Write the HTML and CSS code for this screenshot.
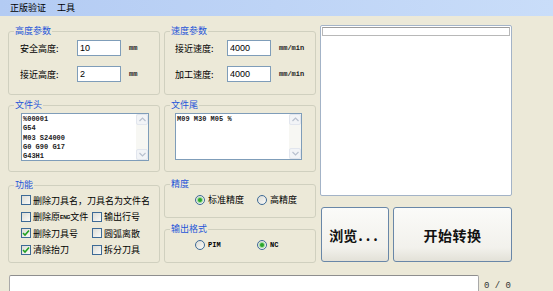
FILE: index.html
```html
<!DOCTYPE html>
<html lang="zh-CN">
<head>
  <meta charset="UTF-8" />
  <title>NC 转换</title>
  <link rel="stylesheet" href="styles.css">
</head>
<body>

  <!-- Menu -->
  <div class="menubar">
    <span>正版验证</span>
    <span>工具</span>
  </div>

  <div class="main">
    <!-- Left column -->
    <div class="col">
      <div class="group g-params">
        <span class="group-title">高度参数</span>
        <div class="param-row"><label>安全高度:</label><input class="edit" type="text" value="10"><span class="unit">mm</span></div>
        <div class="param-row"><label>接近高度:</label><input class="edit" type="text" value="2"><span class="unit">mm</span></div>
      </div>

      <div class="group g-memo">
        <span class="group-title">文件头</span>
        <div class="memo">
          <div class="memo-text">%00001<br>G54<br>M03 S24000<br>G0 G90 G17<br>G43H1</div>
          <div class="vscroll">
            <span class="sb-btn"><svg width="7" height="5" viewBox="0 0 7 5"><path d="M0.5 4 L3.5 1 L6.5 4" fill="none" stroke="#b9c1cf" stroke-width="1.2"/></svg></span>
            <span class="sb-track"></span>
            <span class="sb-btn"><svg width="7" height="5" viewBox="0 0 7 5"><path d="M0.5 1 L3.5 4 L6.5 1" fill="none" stroke="#b9c1cf" stroke-width="1.2"/></svg></span>
          </div>
        </div>
      </div>

      <div class="group g-func">
        <span class="group-title">功能</span>
        <div class="check-grid">
          <div class="check wide"><span class="chk"></span>删除刀具名，刀具名为文件名</div>
          <div class="check"><span class="chk"></span>删除原<small>ENG</small>文件</div>
          <div class="check"><span class="chk"></span>输出行号</div>
          <div class="check"><span class="chk on"><svg width="8" height="8" viewBox="0 0 8 8"><path d="M1 4 L3 6 L7 1.5" fill="none" stroke="#21a121" stroke-width="1.6"/></svg></span>删除刀具号</div>
          <div class="check"><span class="chk"></span>圆弧离散</div>
          <div class="check"><span class="chk on"><svg width="8" height="8" viewBox="0 0 8 8"><path d="M1 4 L3 6 L7 1.5" fill="none" stroke="#21a121" stroke-width="1.6"/></svg></span>清除抬刀</div>
          <div class="check"><span class="chk"></span>拆分刀具</div>
        </div>
      </div>
    </div>

    <!-- Right column -->
    <div class="col">
      <div class="group g-params right">
        <span class="group-title">速度参数</span>
        <div class="param-row"><label>接近速度:</label><input class="edit" type="text" value="4000"><span class="unit">mm/min</span></div>
        <div class="param-row"><label>加工速度:</label><input class="edit" type="text" value="4000"><span class="unit">mm/min</span></div>
      </div>

      <div class="group g-memo right">
        <span class="group-title">文件尾</span>
        <div class="memo">
          <div class="memo-text">M09 M30 M05 %</div>
          <div class="vscroll">
            <span class="sb-btn"><svg width="7" height="5" viewBox="0 0 7 5"><path d="M0.5 4 L3.5 1 L6.5 4" fill="none" stroke="#b9c1cf" stroke-width="1.2"/></svg></span>
            <span class="sb-track"></span>
            <span class="sb-btn"><svg width="7" height="5" viewBox="0 0 7 5"><path d="M0.5 1 L3.5 4 L6.5 1" fill="none" stroke="#b9c1cf" stroke-width="1.2"/></svg></span>
          </div>
        </div>
      </div>

      <div class="group g-radio g-precision">
        <span class="group-title">精度</span>
        <div class="radio-row">
          <div class="radio"><span class="rad on"></span>标准精度</div>
          <div class="radio"><span class="rad"></span>高精度</div>
        </div>
      </div>

      <div class="group g-radio g-format">
        <span class="group-title">输出格式</span>
        <div class="radio-row">
          <div class="radio"><span class="rad"></span><span class="mono">PIM</span></div>
          <div class="radio"><span class="rad on"></span><span class="mono">NC</span></div>
        </div>
      </div>
    </div>

    <!-- Files list + actions -->
    <div class="side">
      <div class="listbox">
        <div class="list-header"></div>
      </div>
      <div class="actions">
        <button class="btn btn-browse">浏览<span class="dots">...</span></button>
        <button class="btn btn-start">开始转换</button>
      </div>
    </div>
  </div>

  <div class="footer">
    <div class="progress"></div>
    <span class="count">0 / 0</span>
  </div>

</body>
</html>
```

FILE: styles.css
```css
body {
  margin: 0;
  background: #ece9d8;
  font-family: "Noto Sans CJK SC", "Liberation Sans", sans-serif;
  font-size: 9px;
  color: #000;
  width: 553px;
  height: 291px;
  overflow: hidden;
}
.menubar {
  height: 16px;
  display: flex;
  align-items: center;
  gap: 11px;
  padding-left: 10px;
  background: linear-gradient(to right, #b3cbf3, #c9ddf9);
  line-height: 12px;
}
.main {
  display: flex;
  padding: 9px 0 0 8px;
}
.col {
  width: 152px;
  padding-top: 6px;
  margin-right: 4px;
  display: flex;
  flex-direction: column;
}
.group {
  position: relative;
  box-sizing: border-box;
  border: 1px solid #d0d0bf;
  border-radius: 3px;
}
.group-title {
  position: absolute;
  top: -7px;
  left: 5px;
  padding: 0 1px;
  line-height: 12px;
  background: #ece9d8;
  color: #1f55d8;
}

/* parameter rows */
.g-params {
  height: 64px;
  padding: 8px 0 0 11px;
  display: flex;
  flex-direction: column;
  gap: 10px;
}
.g-params.right {
  padding-left: 10px;
}
.param-row {
  display: flex;
  align-items: center;
  height: 16px;
}
.param-row label {
  width: 57px;
}
.g-params.right .param-row label {
  width: 52px;
}
.edit {
  box-sizing: border-box;
  width: 44px;
  height: 16px;
  margin: 0;
  padding: 0 2px;
  border: 1px solid #7f9db9;
  background: #fff;
  font-family: "Liberation Sans", sans-serif;
  font-size: 9px;
  color: #000;
  outline: none;
}
.unit {
  margin-left: 8px;
  font-family: "Liberation Mono", monospace;
  font-size: 7px;
  font-weight: bold;
  color: #222;
}

/* memo boxes */
.g-memo {
  height: 67px;
  margin-top: 10px;
  padding: 7px 0 0 12px;
}
.g-memo.right {
  padding-left: 10px;
}
.memo {
  box-sizing: border-box;
  width: 128px;
  height: 48px;
  border: 1px solid #7f9db9;
  background: #fff;
  display: flex;
}
.g-memo.right .memo {
  width: 127px;
  height: 47px;
}
.memo-text {
  flex: 1;
  padding: 1px 1px 0 1px;
  font-family: "Liberation Mono", monospace;
  font-size: 7px;
  line-height: 9.3px;
  font-weight: bold;
  color: #1a1a1a;
  overflow: hidden;
}
.vscroll {
  width: 12px;
  display: flex;
  flex-direction: column;
  background: #f7f7f3;
}
.sb-btn {
  box-sizing: border-box;
  height: 11px;
  display: flex;
  align-items: center;
  justify-content: center;
  border: 1px solid #e2e6ee;
  border-radius: 2px;
  background: #f2f4f7;
}
.sb-track {
  flex: 1;
}

/* function checkboxes */
.g-func {
  height: 78px;
  margin-top: 13px;
  padding: 8px 0 0 12px;
}
.check-grid {
  display: grid;
  grid-template-columns: 71px 60px;
  grid-auto-rows: 12px;
  row-gap: 4.5px;
}
.check {
  display: flex;
  align-items: center;
  white-space: nowrap;
}
.check.wide {
  grid-column: 1 / 3;
}
.check small {
  font-family: "Liberation Sans", sans-serif;
  font-size: 5px;
  font-weight: bold;
  letter-spacing: -0.2px;
}
.chk {
  box-sizing: border-box;
  width: 10px;
  height: 10px;
  margin-right: 2px;
  border: 1px solid #3d6a96;
  background: linear-gradient(135deg, #dcdcd5, #fafaf8);
  display: flex;
  align-items: center;
  justify-content: center;
}

/* radio groups */
.g-radio {
  height: 34px;
  padding-left: 30px;
}
.g-precision {
  margin-top: 12px;
  padding-top: 8px;
}
.g-format {
  margin-top: 11px;
  padding-top: 9px;
}
.radio-row {
  display: grid;
  grid-template-columns: 62px auto;
  height: 12px;
}
.radio {
  display: flex;
  align-items: center;
  white-space: nowrap;
}
.rad {
  box-sizing: border-box;
  width: 10px;
  height: 10px;
  margin-right: 3px;
  border: 1px solid #3d6a96;
  border-radius: 50%;
  background: linear-gradient(135deg, #dcdcd5, #fafaf8);
  display: flex;
  align-items: center;
  justify-content: center;
}
.rad.on::after {
  content: "";
  width: 4px;
  height: 4px;
  border-radius: 50%;
  background: #2aa42a;
  box-shadow: 0 0 0 1px #9fdc9f;
}
.mono {
  font-family: "Liberation Mono", monospace;
  font-size: 7px;
  font-weight: bold;
}

/* right side */
.side {
  width: 192px;
  display: flex;
  flex-direction: column;
}
.listbox {
  box-sizing: border-box;
  height: 171px;
  border: 1px solid #a3b3c7;
  border-radius: 2px;
  background: #fff;
  padding: 1px;
}
.list-header {
  box-sizing: border-box;
  height: 9px;
  border: 1px solid #b8b8b8;
  border-top-color: #9c9c9c;
  background: #fff;
}
.actions {
  display: flex;
  gap: 4px;
  margin-top: 11px;
  margin-left: 1px;
}
.btn {
  box-sizing: border-box;
  height: 55px;
  border: 1px solid #6987a8;
  border-radius: 3px;
  background: linear-gradient(#fbfbf9, #f2f1ec 75%, #e3e1d8);
  font-family: "Noto Sans CJK SC", sans-serif;
  font-size: 14px;
  font-weight: bold;
  color: #111;
  padding: 0;
}
.btn-browse {
  width: 68px;
}
.btn-start {
  width: 119px;
  letter-spacing: 0.5px;
}
.dots {
  letter-spacing: 3px;
  margin-left: 1px;
}

.footer {
  display: flex;
  align-items: flex-start;
  margin-top: 12px;
  padding-left: 9px;
}
.progress {
  box-sizing: border-box;
  width: 470px;
  height: 20px;
  border: 1px solid #a9a9a9;
  border-top-color: #8e8e8e;
  border-radius: 2px;
  background: #fff;
}
.count {
  margin: 6px 0 0 5px;
  font-family: "Liberation Mono", monospace;
  font-size: 9px;
  color: #333;
}
```
